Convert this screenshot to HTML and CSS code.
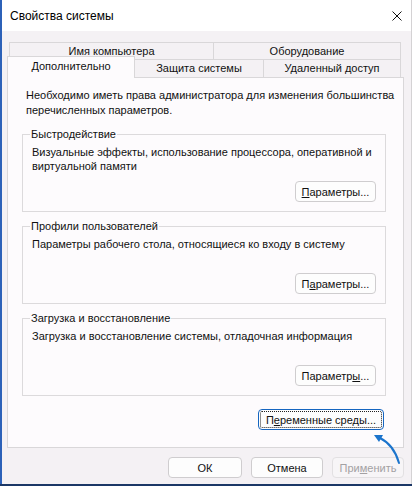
FILE: index.html
```html
<!DOCTYPE html>
<html>
  <head>
    <meta charset="utf-8">
    <link rel="stylesheet" href="styles.css">
  </head>
  <body>
  <div class="window">
    <div class="titlebar">
      <span class="title">Свойства системы</span>
      <svg class="close" width="10" height="10" viewBox="0 0 10 10">
        <path d="M0.5 0.5 L9.5 9.5 M9.5 0.5 L0.5 9.5" stroke="#111" stroke-width="1" fill="none"/>
      </svg>
    </div>
    <div class="client">
      <div class="tab-row back">
        <div class="tab tab-computer">Имя компьютера</div>
        <div class="tab tab-hardware">Оборудование</div>
      </div>
      <div class="tab-row front">
        <div class="tab tab-advanced active">Дополнительно</div>
        <div class="tab tab-protect">Защита системы</div>
        <div class="tab tab-remote">Удаленный доступ</div>
      </div>
      <div class="panel">
        <p class="intro">Необходимо иметь права администратора для изменения большинства перечисленных параметров.</p>

        <fieldset class="group">
          <legend>Быстродействие</legend>
          <p class="desc">Визуальные эффекты, использование процессора, оперативной и виртуальной памяти</p>
          <div class="actions"><button class="btn btn-params"><u>П</u>араметры...</button></div>
        </fieldset>

        <fieldset class="group">
          <legend>Профили пользователей</legend>
          <p class="desc">Параметры рабочего стола, относящиеся ко входу в систему</p>
          <div class="actions"><button class="btn btn-params">П<u>а</u>раметры...</button></div>
        </fieldset>

        <fieldset class="group">
          <legend>Загрузка и восстановление</legend>
          <p class="desc">Загрузка и восстановление системы, отладочная информация</p>
          <div class="actions"><button class="btn btn-params">Параметр<u>ы</u>...</button></div>
        </fieldset>

        <div class="env-row">
          <button class="btn btn-env">П<u>е</u>ременные среды...</button>
        </div>
      </div>
      <div class="dialog-buttons">
        <button class="btn btn-ok">ОК</button>
        <button class="btn btn-cancel">Отмена</button>
        <button class="btn btn-apply" disabled>При<u>м</u>енить</button>
      </div>
    </div>
  </div>

  <!-- pointer drawn over the dialog -->
  <svg class="pointer" width="40" height="40" viewBox="0 0 40 40">
    <path d="M31 35 Q26 17 12 10" stroke="#1b74cc" stroke-width="2" fill="none" stroke-linecap="round"/>
    <polygon points="6,7 15,7 11,14" fill="#1b74cc"/>
  </svg>
  </body>
</html>
```

FILE: styles.css
```css
* {
  box-sizing: border-box;
}
html, body {
  margin: 0;
  padding: 0;
}
body {
  width: 412px;
  height: 486px;
  overflow: hidden;
  background-color: #1b3766;
  font-family: "Liberation Sans", Arial, sans-serif;
  font-size: 11px;
  color: #111;
  position: relative;
}
.window {
  width: 412px;
  height: 484px;
  border-left: 2px solid #2c61b8;
  border-right: 1px solid #d4d2d4;
  background-color: #f4f1f4;
  display: flex;
  flex-direction: column;
}
.titlebar {
  height: 31px;
  background-color: #ffffff;
  display: flex;
  align-items: center;
  justify-content: space-between;
  padding: 0 9px 0 8px;
}
.title {
  font-size: 12px;
  color: #000;
}
.close {
  display: block;
}
.client {
  flex: 1;
  padding: 11px 7px 0 5px;
}

/* tabs */
.tab-row {
  display: flex;
}
.tab-row.back {
  height: 17px;
  padding-left: 2px;
}
.tab-row.front {
  height: 18px;
  align-items: flex-end;
}
.tab {
  border: 1px solid #d9d7d9;
  border-bottom: none;
  background-color: #f4f1f4;
  text-align: center;
  white-space: nowrap;
}
.tab + .tab {
  margin-left: -1px;
}
.back .tab {
  height: 17px;
  line-height: 16px;
}
.front .tab {
  height: 18px;
  line-height: 17px;
}
.tab-computer { width: 205px; }
.tab-hardware { width: 188px; }
.tab-protect { width: 130px; }
.tab-remote { width: 138px; }
.front .tab.active {
  width: 128px;
  height: 22px;
  line-height: 19px;
  margin-bottom: -1px;
  background-color: #fdfbfd;
  position: relative;
  z-index: 2;
}

/* panel */
.panel {
  width: 397px;
  height: 371px;
  border: 1px solid #d9d7d9;
  background-color: #fdfbfd;
  padding: 10px 17px 0 14px;
}
.intro {
  margin: 0 -14px 0 0;
  padding-left: 4px;
  line-height: 15px;
}
.group {
  margin: 9px 0 0;
  padding: 5px 9px 9px;
  border: 1px solid #dcdadc;
  min-width: 0;
}
.group + .group {
  margin-top: 7px;
}
.group legend {
  padding: 0 1px;
  margin-left: -2px;
  line-height: 14px;
}
.desc {
  margin: 0;
  min-height: 28px;
  line-height: 13.5px;
}
.actions {
  margin-top: 7px;
  text-align: right;
}

/* buttons */
.btn {
  font-family: "Liberation Sans", Arial, sans-serif;
  font-size: 11px;
  color: #111;
  height: 21px;
  padding: 0;
  border: 1px solid #cfcdcf;
  border-radius: 4px;
  background-color: #fdfdfd;
}
.btn-params {
  width: 81px;
}
.env-row {
  margin-top: 13px;
  text-align: right;
  padding-right: 2px;
}
.btn-env {
  width: 126px;
  border-color: #1565c0;
  outline: 1px dotted #222;
  outline-offset: -3px;
}
.dialog-buttons {
  display: flex;
  justify-content: flex-end;
  gap: 9px;
  margin-top: 9px;
}
.btn-ok { width: 74px; }
.btn-cancel { width: 72px; }
.btn-apply {
  width: 72px;
  color: #a3a1a3;
  border-color: #e2e0e2;
  background-color: #f7f5f7;
}
.pointer {
  position: absolute;
  left: 368px;
  top: 428px;
}
```
